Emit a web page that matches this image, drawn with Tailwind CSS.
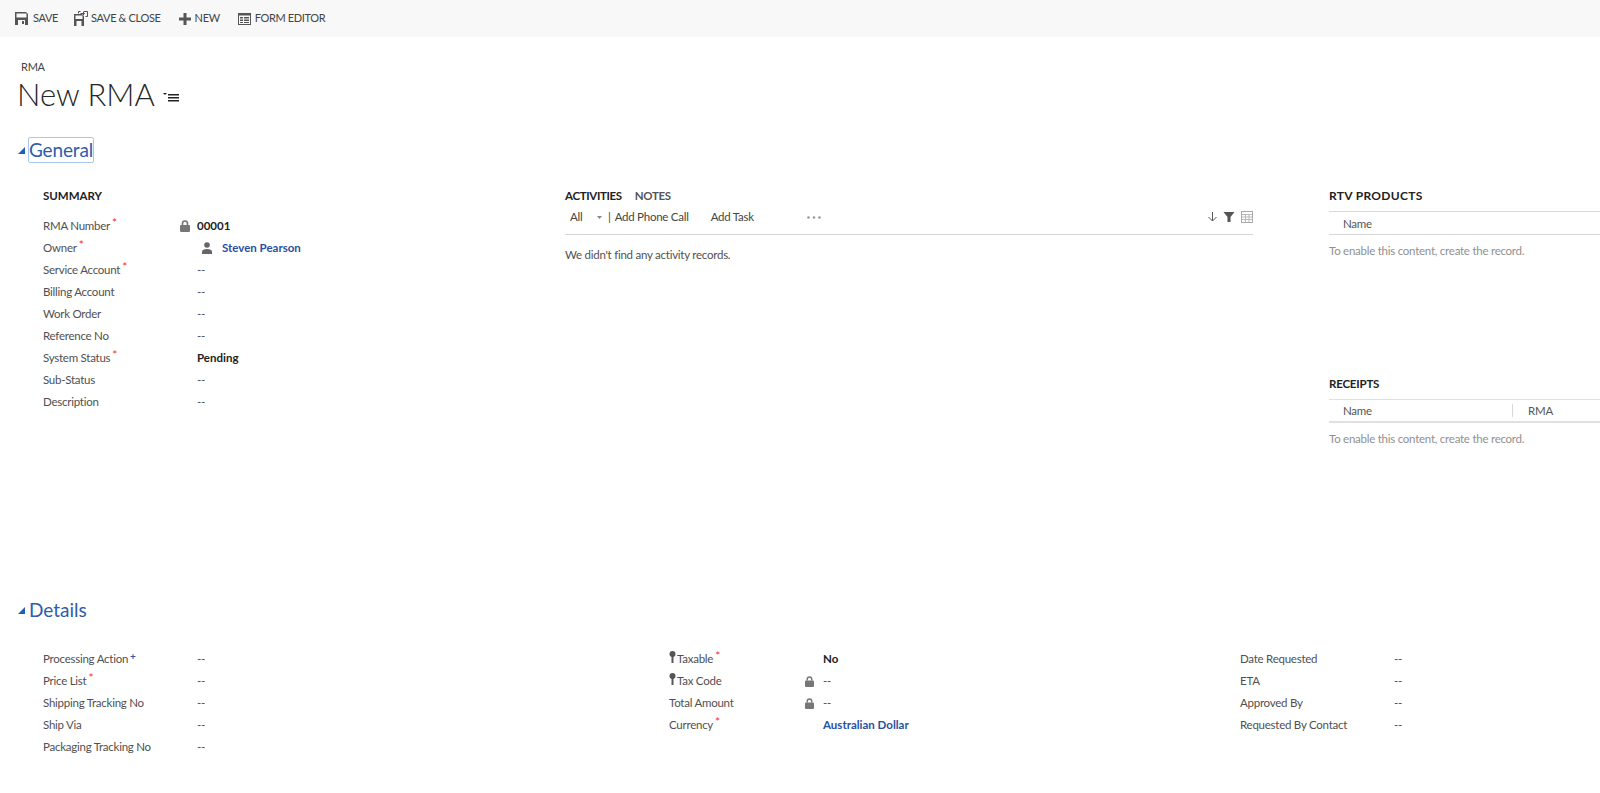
<!DOCTYPE html>
<html lang="en">
<head>
    <meta charset="UTF-8">
    <title>New RMA</title>
    <script src="https://cdn.jsdelivr.net/npm/@tailwindcss/browser@4"></script>
</head>
<body class="bg-white font-['Lato','Open_Sans',sans-serif] text-[11.5px] tracking-[-0.25px] text-[#505050] h-[793px] overflow-hidden">
    <!-- Command bar -->
    <header class="h-[37px] bg-[#f8f8f8] flex items-center pl-[15px] text-[11px] tracking-[-0.35px] text-[#444]">
        <div class="flex items-center gap-[5px] mr-[16px]">
            <svg class="w-[13px] h-[13px]" viewBox="0 0 13 13"><path fill="#555" fill-rule="evenodd" d="M0 0h11l2 2v11H0zM1.500 1.500v4h10v-4zM3 8v5h7V8z"/><rect x="7" y="9" width="2" height="3" fill="#555"/></svg>
            <span>SAVE</span>
        </div>
        <div class="flex items-center gap-[3px] mr-[18px]">
            <svg class="w-[14px] h-[15px]" viewBox="0 0 14 15"><path fill="#555" fill-rule="evenodd" d="M0 3h8l2 2v10H0zM1.500 4.500V8h7V4.500zM2.500 10v5h5v-5z"/><path fill="none" stroke="#555" d="M4.500 2.500V.5h2M9.500.5h4v5h-2"/><path fill="none" stroke="#555" d="M6.500 2.500h4M9 1l1.500 1.500L9 4"/></svg>
            <span>SAVE &amp; CLOSE</span>
        </div>
        <div class="flex items-center gap-[4px] mr-[18px]">
            <svg class="w-[12px] h-[12px]" viewBox="0 0 12 12"><path fill="#555" d="M4.500 0h3v4.500H12v3H7.500V12h-3V7.500H0v-3h4.500z"/></svg>
            <span>NEW</span>
        </div>
        <div class="flex items-center gap-[4px]">
            <svg class="w-[13px] h-[12px]" viewBox="0 0 13 12"><rect x=".5" y=".5" width="12" height="11" fill="none" stroke="#555"/><path fill="#555" d="M0 0h13v2.500H0zM2 4h3v1.500H2zM6 4h5v1.500H6zM2 6.500h3V8H2zM6 6.500h5V8H6zM2 9h3v1H2zM6 9h5v1H6z"/></svg>
            <span>FORM EDITOR</span>
        </div>
    </header>

    <!-- Title -->
    <div class="pl-[17px] pt-[24px] h-[99px]">
        <div class="pl-[4px] text-[11px] leading-[12px] text-[#444]">RMA</div>
        <div class="flex items-center h-[39px] pt-[3px]">
            <h1 class="text-[31px] leading-[36px] font-light tracking-normal text-[#262626]">New RMA</h1>
            <svg class="ml-[8px] mt-[6px] w-[17px] h-[11px]" viewBox="0 0 17 11"><path fill="#222" d="M0 1h4L2 3zM5 2h11v1.500H5zM5 5h11v1.500H5zM5 8h11v1.500H5z"/></svg>
        </div>
    </div>

    <!-- General -->
    <section class="h-[461px]">
        <div class="flex items-center pl-[18px] h-[28px]">
            <svg class="w-[7px] h-[7px]" viewBox="0 0 7 7"><path fill="#1f5fb4" d="M7 0v7H0z"/></svg>
            <h2 class="ml-[3px] h-[26px] border border-[#a9c8ee] rounded-[2px] text-[19px] leading-[24px] tracking-[-0.15px] text-[#2e5cad]">General</h2>
        </div>
        <div class="flex pl-[43px] pt-[23px]">
            <div class="w-[522px] shrink-0">
                <div class="font-bold tracking-normal text-[#222] h-[19px] leading-[17px] mb-[9px]">SUMMARY</div>
                <div class="flex h-[22px] items-center"><span class="w-[137px]">RMA Number<sup class="text-[12px] text-red-500 ml-[2px] top-[-3px]">*</sup></span><svg class="w-[10px] h-[12px] mr-[7px]" viewBox="0 0 10 12"><path fill="none" stroke="#777" stroke-width="1.600" d="M2.500 5V3.500a2.500 2.500 0 0 1 5 0V5"/><rect y="5" width="10" height="7" rx="1" fill="#777"/></svg><span class="font-bold tracking-normal text-[#222]">00001</span></div>
                <div class="flex h-[22px] items-center"><span class="w-[154px]">Owner<sup class="text-[12px] text-red-500 ml-[2px] top-[-3px]">*</sup></span><svg class="ml-[5px] w-[10px] h-[12px] mr-[10px]" viewBox="0 0 10 12"><circle cx="5" cy="3" r="2.800" fill="#666"/><path fill="#666" d="M0 12V9.500C0 8 2 7 5 7s5 1 5 2.500V12z"/></svg><span class="font-bold tracking-normal text-[#2a4f9f]">Steven Pearson</span></div>
                <div class="flex h-[22px] items-center"><span class="w-[154px]">Service Account<sup class="text-[12px] text-red-500 ml-[2px] top-[-3px]">*</sup></span><span>--</span></div>
                <div class="flex h-[22px] items-center"><span class="w-[154px]">Billing Account</span><span>--</span></div>
                <div class="flex h-[22px] items-center"><span class="w-[154px]">Work Order</span><span>--</span></div>
                <div class="flex h-[22px] items-center"><span class="w-[154px]">Reference No</span><span>--</span></div>
                <div class="flex h-[22px] items-center"><span class="w-[154px]">System Status<sup class="text-[12px] text-red-500 ml-[2px] top-[-3px]">*</sup></span><span class="font-bold tracking-normal text-[#222]">Pending</span></div>
                <div class="flex h-[22px] items-center"><span class="w-[154px]">Sub-Status</span><span>--</span></div>
                <div class="flex h-[22px] items-center"><span class="w-[154px]">Description</span><span>--</span></div>
            </div>

            <div class="w-[764px] shrink-0">
                <div class="w-[688px]">
                    <div class="flex gap-[13px] font-bold h-[19px] leading-[17px] tracking-[-0.35px]"><span class="text-[#222]">ACTIVITIES</span><span class="text-[#555]">NOTES</span></div>
                    <div class="flex items-center h-[29px] border-b border-[#d4d4d4] pb-[6px] pl-[5px] text-[#444]">
                        <span class="w-[27px]">All</span>
                        <svg class="w-[5px] h-[3px] mr-[6px]" viewBox="0 0 5 3"><path fill="#888" d="M0 0h5L2.500 3z"/></svg>
                        <span class="mr-[4px]">|</span>
                        <span class="w-[96px]">Add Phone Call</span>
                        <span class="w-[96px]">Add Task</span>
                        <svg class="w-[14px] h-[3px]" viewBox="0 0 14 3"><circle cx="1.500" cy="1.500" r="1.300" fill="#999"/><circle cx="7" cy="1.500" r="1.300" fill="#999"/><circle cx="12.500" cy="1.500" r="1.300" fill="#999"/></svg>
                        <div class="ml-auto flex items-center gap-[6px]">
                            <svg class="w-[9px] h-[10px]" viewBox="0 0 9 10"><path fill="none" stroke="#555" d="M4.500 0v9M.5 5l4 4 4-4"/></svg>
                            <svg class="w-[12px] h-[10px]" viewBox="0 0 11 10"><path fill="#555" d="M0 0h11L7 5v5H4V5z"/></svg>
                            <svg class="w-[12px] h-[12px]" viewBox="0 0 12 12"><rect x=".5" y=".5" width="11" height="11" fill="none" stroke="#aaa"/><path fill="none" stroke="#bbb" d="M1 3.500h10M1 6h10M1 8.500h10M4.500 3.500V11M8 3.500V11"/></svg>
                        </div>
                    </div>
                    <div class="mt-[12px] leading-[16px]">We didn't find any activity records.</div>
                </div>
            </div>

            <div class="flex-1">
                <div class="font-bold text-[12px] tracking-[0.3px] text-[#222] h-[19px] leading-[17px]">RTV PRODUCTS</div>
                <div class="flex items-center h-[24px] border-t border-b border-[#d8d8d8] pl-[14px] pt-px mt-[5px] text-[#555]">Name</div>
                <div class="mt-[8px] leading-[16px] text-[#909090]">To enable this content, create the record.</div>
                <div class="mt-[116px] font-bold tracking-[-0.2px] text-[#222] h-[19px] leading-[17px]">RECEIPTS</div>
                <div class="flex items-center h-[24px] border-t border-b-2 border-[#e0e0e0] pl-[14px] mt-[5px] text-[#555]">
                    <span class="w-[170px] h-[13px] leading-[13px] border-r border-[#d8d8d8]">Name</span><span class="pl-[15px]">RMA</span>
                </div>
                <div class="mt-[8px] leading-[16px] text-[#909090]">To enable this content, create the record.</div>
            </div>
        </div>
    </section>

    <!-- Details -->
    <section>
        <div class="flex items-center pl-[18px] h-[26px]">
            <svg class="w-[7px] h-[7px]" viewBox="0 0 7 7"><path fill="#1f5fb4" d="M7 0v7H0z"/></svg>
            <h2 class="ml-[4px] text-[19px] leading-[24px] tracking-normal text-[#2e5cad]">Details</h2>
        </div>
        <div class="flex pl-[43px] pt-[25px]">
            <div class="w-[626px] shrink-0">
                <div class="flex h-[22px] items-center"><span class="w-[154px]">Processing Action<sup class="text-[10px] font-bold text-[#2e5cad] ml-[2px] top-[-3px]">+</sup></span><span>--</span></div>
                <div class="flex h-[22px] items-center"><span class="w-[154px]">Price List<sup class="text-[12px] text-red-500 ml-[2px] top-[-3px]">*</sup></span><span>--</span></div>
                <div class="flex h-[22px] items-center"><span class="w-[154px]">Shipping Tracking No</span><span>--</span></div>
                <div class="flex h-[22px] items-center"><span class="w-[154px]">Ship Via</span><span>--</span></div>
                <div class="flex h-[22px] items-center"><span class="w-[154px]">Packaging Tracking No</span><span>--</span></div>
            </div>
            <div class="w-[571px] shrink-0">
                <div class="flex h-[22px] items-center"><svg class="w-[7px] h-[12px] mb-[5px] mr-px" viewBox="0 0 7 12"><circle cx="3.500" cy="3" r="3" fill="#555"/><path fill="#555" d="M2.500 4h2v8h-2z"/></svg><span class="w-[146px]">Taxable<sup class="text-[12px] text-red-500 ml-[2px] top-[-3px]">*</sup></span><span class="font-bold tracking-normal text-[#222]">No</span></div>
                <div class="flex h-[22px] items-center"><svg class="w-[7px] h-[12px] mb-[5px] mr-px" viewBox="0 0 7 12"><circle cx="3.500" cy="3" r="3" fill="#555"/><path fill="#555" d="M2.500 4h2v8h-2z"/></svg><span class="w-[128px]">Tax Code</span><svg class="w-[9px] h-[11px] mr-[9px]" viewBox="0 0 10 12"><path fill="none" stroke="#777" stroke-width="1.600" d="M2.500 5V3.500a2.500 2.500 0 0 1 5 0V5"/><rect y="5" width="10" height="7" rx="1" fill="#777"/></svg><span>--</span></div>
                <div class="flex h-[22px] items-center"><span class="w-[136px]">Total Amount</span><svg class="w-[9px] h-[11px] mr-[9px]" viewBox="0 0 10 12"><path fill="none" stroke="#777" stroke-width="1.600" d="M2.500 5V3.500a2.500 2.500 0 0 1 5 0V5"/><rect y="5" width="10" height="7" rx="1" fill="#777"/></svg><span>--</span></div>
                <div class="flex h-[22px] items-center"><span class="w-[154px]">Currency<sup class="text-[12px] text-red-500 ml-[2px] top-[-3px]">*</sup></span><span class="font-bold tracking-normal text-[#2a4f9f]">Australian Dollar</span></div>
            </div>
            <div class="flex-1">
                <div class="flex h-[22px] items-center"><span class="w-[154px]">Date Requested</span><span>--</span></div>
                <div class="flex h-[22px] items-center"><span class="w-[154px]">ETA</span><span>--</span></div>
                <div class="flex h-[22px] items-center"><span class="w-[154px]">Approved By</span><span>--</span></div>
                <div class="flex h-[22px] items-center"><span class="w-[154px]">Requested By Contact</span><span>--</span></div>
            </div>
        </div>
    </section>
</body>
</html>
